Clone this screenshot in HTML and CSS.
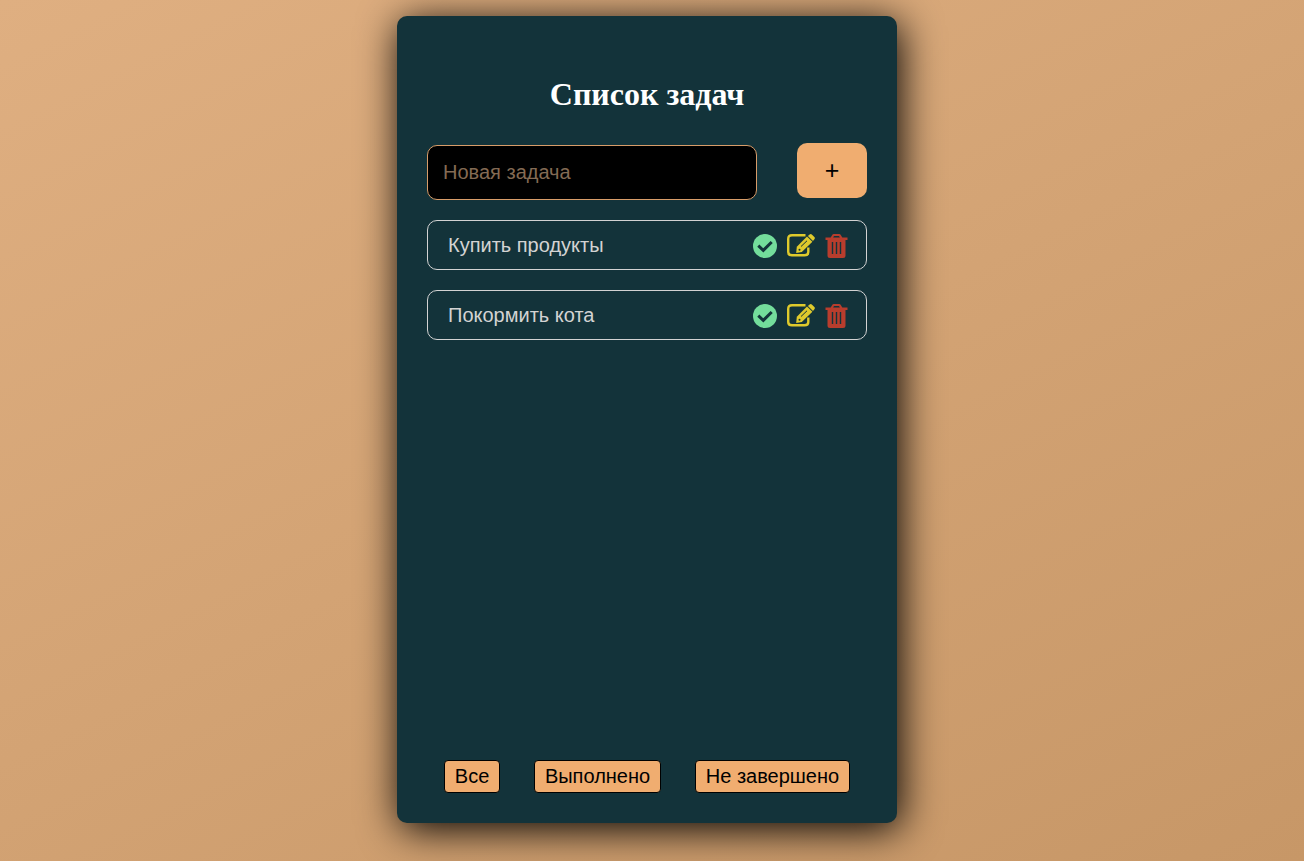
FILE: index.html
```html
<!DOCTYPE html>
<html lang="ru">
<head>
<meta charset="utf-8">
<meta name="viewport" content="width=device-width, initial-scale=1">
<title>Список задач</title>
<link rel="stylesheet" href="styles.css">
</head>
<body>
<svg class="sprite" aria-hidden="true">
  <symbol id="check" viewBox="0 0 24 24">
    <circle cx="12" cy="12" r="12"/>
    <path class="tick" d="M5.300 11.600 10.300 16.400 18.700 8"/>
  </symbol>
  <symbol id="edit" viewBox="0 0 28 24">
    <path class="frame" d="M18.500 1.200H5Q1.200 1.200 1.200 5V18Q1.200 21.300 5 21.300H17.500Q21.300 21.300 21.300 18V13.500"/>
    <path d="M20 2.600 25.400 7.800 14.800 18 9.200 19 9.800 12.700Z"/>
    <path d="M20.900 2 22.600 .5Q23.800 -.3 24.800 .5L27.600 3.200Q28.300 4.200 27.400 5.200L26 6.900Z"/>
    <path class="slit" d="M14 12.500 20 6.800"/>
    <circle class="hole" cx="12.500" cy="15.700" r="1"/>
  </symbol>
  <symbol id="trash" viewBox="0 0 22 24">
    <path d="M0 3.500H5.200L6.700 1Q7.200 0 8.300 0H13.700Q14.800 0 15.300 1L16.800 3.500H22V6H20V21.500Q20 24 17.500 24H4.500Q2 24 2 21.500V6H0ZM7.600 3.500H14.400L13.500 2H8.500Z" fill-rule="evenodd"/>
    <path class="bars" d="M7 8V20M11 8V20M15 8V20"/>
  </symbol>
</svg>
<main class="card">
  <h1 class="title">Список задач</h1>
  <form class="new-task">
    <input class="new-task-input" type="text" placeholder="Новая задача" aria-label="Новая задача">
    <button class="add" type="button" aria-label="Добавить">+</button>
  </form>
  <ul class="tasks">
    <li class="task">
      <span class="task-name">Купить продукты</span>
      <button class="action done" type="button" aria-label="Выполнить"><svg class="icon"><use href="#check"/></svg></button>
      <button class="action edit" type="button" aria-label="Изменить"><svg class="icon icon-wide"><use href="#edit"/></svg></button>
      <button class="action remove" type="button" aria-label="Удалить"><svg class="icon icon-narrow"><use href="#trash"/></svg></button>
    </li>
    <li class="task">
      <span class="task-name">Покормить кота</span>
      <button class="action done" type="button" aria-label="Выполнить"><svg class="icon"><use href="#check"/></svg></button>
      <button class="action edit" type="button" aria-label="Изменить"><svg class="icon icon-wide"><use href="#edit"/></svg></button>
      <button class="action remove" type="button" aria-label="Удалить"><svg class="icon icon-narrow"><use href="#trash"/></svg></button>
    </li>
  </ul>
  <nav class="filters">
    <button class="filter" type="button">Все</button>
    <button class="filter" type="button">Выполнено</button>
    <button class="filter" type="button">Не завершено</button>
  </nav>
</main>
</body>
</html>
```
FILE: styles.css
```css
* {
  box-sizing: border-box;
}

body {
  display: flex;
  justify-content: center;
  min-height: 100vh;
  margin: 0;
  padding: 16px 10px 38px 0;
  background: linear-gradient(153deg, #dfaf81, #c79767);
  font-family: "Liberation Sans", Arial, sans-serif;
  font-size: 20px;
}

.sprite {
  position: absolute;
  width: 0;
  height: 0;
}

.card {
  display: flex;
  flex-direction: column;
  width: 100%;
  max-width: 500px;
  padding: 60px 30px 30px;
  border-radius: 10px;
  background: #13333a;
  box-shadow: 3px 6px 40px #000;
}

.title {
  margin: 0 0 30px;
  color: #fff;
  font-family: "Liberation Serif", "Times New Roman", serif;
  font-size: 32px;
  line-height: 37px;
  text-align: center;
}

.new-task {
  display: flex;
  align-items: baseline;
  gap: 40px;
}

.new-task-input {
  flex: 1;
  min-width: 0;
  height: 55px;
  padding: 0 15px;
  border: 1px solid #d79c69;
  border-radius: 10px;
  background: #000;
  color: #f0ad70;
  font: inherit;
}

.new-task-input::placeholder {
  color: #846b54;
}

.add {
  width: 70px;
  height: 55px;
  padding: 0;
  border: 0;
  border-radius: 10px;
  background: #f0ad70;
  color: #000;
  font: inherit;
  font-size: 25px;
}

.tasks {
  display: flex;
  flex: 1;
  flex-direction: column;
  gap: 20px;
  margin: 20px 0;
  padding: 0;
  list-style: none;
}

.task {
  display: flex;
  align-items: center;
  gap: 10px;
  height: 50px;
  padding: 0 18px 0 20px;
  border: 1px solid #d3d3d3;
  border-radius: 10px;
  color: #d3d3d3;
}

.task-name {
  flex: 1;
}

.action {
  display: flex;
  padding: 2px 0 0;
  border: 0;
  background: none;
}

.done {
  color: #73dd9b;
}

.edit {
  color: #dfca2c;
}

.remove {
  color: #b83d2d;
}

.icon {
  width: 24px;
  height: 24px;
  fill: currentColor;
}

.icon-wide {
  width: 28px;
}

.icon-narrow {
  width: 23px;
}

.tick,
.frame,
.slit,
.bars {
  fill: none;
  stroke: #13333a;
}

.tick {
  stroke-width: 3;
}

.frame {
  stroke: currentColor;
  stroke-width: 2.4;
}

.slit {
  stroke-width: 1;
}

.hole {
  fill: #13333a;
}

.bars {
  stroke-width: 1.4;
}

.filters {
  display: flex;
  justify-content: space-around;
}

.filter {
  height: 33px;
  padding: 0 10px;
  border: 1px solid #000;
  border-radius: 4px;
  background: #f0ad70;
  color: #000;
  font: inherit;
}
```
